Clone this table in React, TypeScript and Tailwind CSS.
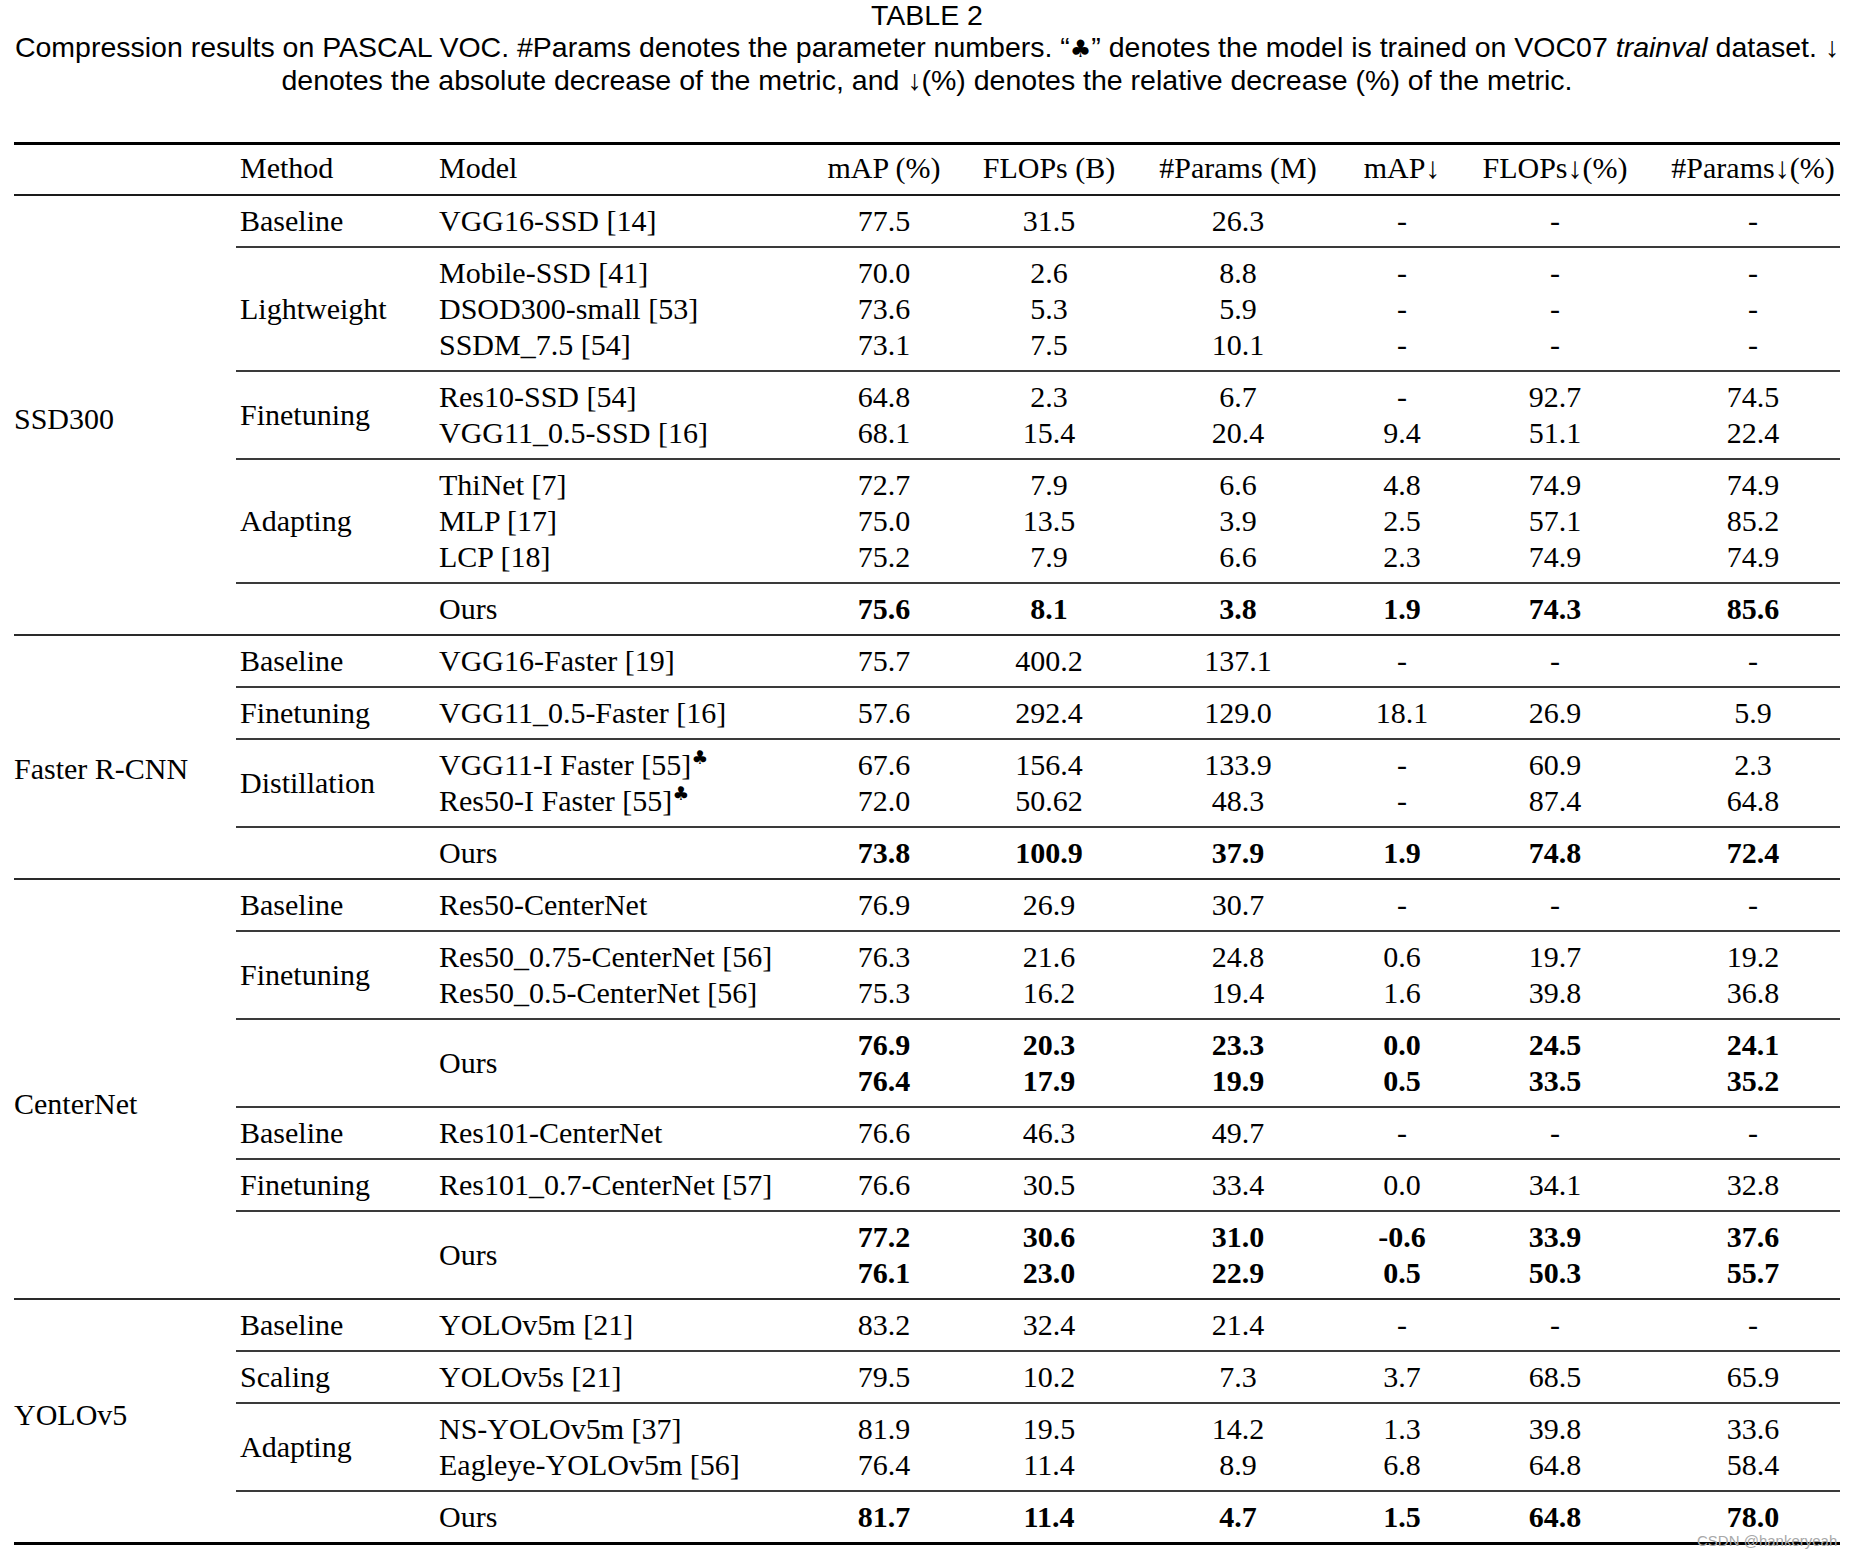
import React from "react";

type Line = { model?: string; club?: boolean; vals: string[] };
type Section = { method: string; lines: Line[]; bold?: boolean; span?: string };
type Group = { label: string; labelPad: string; sections: Section[] };

const dash = ["-", "-", "-"];

const groups: Group[] = [
  {
    label: "SSD300",
    labelPad: "pt-[8px]",
    sections: [
      { method: "Baseline", lines: [{ model: "VGG16-SSD [14]", vals: ["77.5", "31.5", "26.3", ...dash] }] },
      {
        method: "Lightweight",
        lines: [
          { model: "Mobile-SSD [41]", vals: ["70.0", "2.6", "8.8", ...dash] },
          { model: "DSOD300-small [53]", vals: ["73.6", "5.3", "5.9", ...dash] },
          { model: "SSDM_7.5 [54]", vals: ["73.1", "7.5", "10.1", ...dash] },
        ],
      },
      {
        method: "Finetuning",
        lines: [
          { model: "Res10-SSD [54]", vals: ["64.8", "2.3", "6.7", "-", "92.7", "74.5"] },
          { model: "VGG11_0.5-SSD [16]", vals: ["68.1", "15.4", "20.4", "9.4", "51.1", "22.4"] },
        ],
      },
      {
        method: "Adapting",
        lines: [
          { model: "ThiNet [7]", vals: ["72.7", "7.9", "6.6", "4.8", "74.9", "74.9"] },
          { model: "MLP [17]", vals: ["75.0", "13.5", "3.9", "2.5", "57.1", "85.2"] },
          { model: "LCP [18]", vals: ["75.2", "7.9", "6.6", "2.3", "74.9", "74.9"] },
        ],
      },
      { method: "", bold: true, lines: [{ model: "Ours", vals: ["75.6", "8.1", "3.8", "1.9", "74.3", "85.6"] }] },
    ],
  },
  {
    label: "Faster R-CNN",
    labelPad: "pt-[24px]",
    sections: [
      { method: "Baseline", lines: [{ model: "VGG16-Faster [19]", vals: ["75.7", "400.2", "137.1", ...dash] }] },
      { method: "Finetuning", lines: [{ model: "VGG11_0.5-Faster [16]", vals: ["57.6", "292.4", "129.0", "18.1", "26.9", "5.9"] }] },
      {
        method: "Distillation",
        lines: [
          { model: "VGG11-I Faster [55]", club: true, vals: ["67.6", "156.4", "133.9", "-", "60.9", "2.3"] },
          { model: "Res50-I Faster [55]", club: true, vals: ["72.0", "50.62", "48.3", "-", "87.4", "64.8"] },
        ],
      },
      { method: "", bold: true, lines: [{ model: "Ours", vals: ["73.8", "100.9", "37.9", "1.9", "74.8", "72.4"] }] },
    ],
  },
  {
    label: "CenterNet",
    labelPad: "pt-[30px]",
    sections: [
      { method: "Baseline", lines: [{ model: "Res50-CenterNet", vals: ["76.9", "26.9", "30.7", ...dash] }] },
      {
        method: "Finetuning",
        lines: [
          { model: "Res50_0.75-CenterNet [56]", vals: ["76.3", "21.6", "24.8", "0.6", "19.7", "19.2"] },
          { model: "Res50_0.5-CenterNet [56]", vals: ["75.3", "16.2", "19.4", "1.6", "39.8", "36.8"] },
        ],
      },
      {
        method: "",
        bold: true,
        span: "Ours",
        lines: [
          { vals: ["76.9", "20.3", "23.3", "0.0", "24.5", "24.1"] },
          { vals: ["76.4", "17.9", "19.9", "0.5", "33.5", "35.2"] },
        ],
      },
      { method: "Baseline", lines: [{ model: "Res101-CenterNet", vals: ["76.6", "46.3", "49.7", ...dash] }] },
      { method: "Finetuning", lines: [{ model: "Res101_0.7-CenterNet [57]", vals: ["76.6", "30.5", "33.4", "0.0", "34.1", "32.8"] }] },
      {
        method: "",
        bold: true,
        span: "Ours",
        lines: [
          { vals: ["77.2", "30.6", "31.0", "-0.6", "33.9", "37.6"] },
          { vals: ["76.1", "23.0", "22.9", "0.5", "50.3", "55.7"] },
        ],
      },
    ],
  },
  {
    label: "YOLOv5",
    labelPad: "pb-[12px]",
    sections: [
      { method: "Baseline", lines: [{ model: "YOLOv5m [21]", vals: ["83.2", "32.4", "21.4", ...dash] }] },
      { method: "Scaling", lines: [{ model: "YOLOv5s [21]", vals: ["79.5", "10.2", "7.3", "3.7", "68.5", "65.9"] }] },
      {
        method: "Adapting",
        lines: [
          { model: "NS-YOLOv5m [37]", vals: ["81.9", "19.5", "14.2", "1.3", "39.8", "33.6"] },
          { model: "Eagleye-YOLOv5m [56]", vals: ["76.4", "11.4", "8.9", "6.8", "64.8", "58.4"] },
        ],
      },
      { method: "", bold: true, lines: [{ model: "Ours", vals: ["81.7", "11.4", "4.7", "1.5", "64.8", "78.0"] }] },
    ],
  },
];

function NumCells({ vals, bold }: { vals: string[]; bold?: boolean }) {
  const w = ["w-[168px]", "w-[162px]", "w-[216px]", "w-[112px]", "w-[194px]", "w-[188px] pl-[14px]"];
  return (
    <div className={`flex h-[36px] items-center ${bold ? "font-bold" : ""}`}>
      <div className={`${w[0]} text-center`}>{vals[0]}</div>
      <div className={`${w[1]} text-center`}>{vals[1]}</div>
      <div className={`${w[2]} text-center`}>{vals[2]}</div>
      <div className={`${w[3]} text-center`}>{vals[3]}</div>
      <div className={`${w[4]} text-center`}>{vals[4]}</div>
      <div className={`${w[5]} text-center`}>{vals[5]}</div>
    </div>
  );
}

function SectionRow({ s, last }: { s: Section; last: boolean }) {
  return (
    <div className={`flex py-[7px] ${last ? "" : "border-b-2 border-[#3a3a3a]"}`}>
      <div className="w-[200px] pl-[4px] flex items-center whitespace-nowrap">{s.method}</div>
      <div className="w-[364px] pl-[3px] flex flex-col justify-center">
        {s.span ? (
          <div className="whitespace-nowrap">{s.span}</div>
        ) : (
          s.lines.map((l, i) => (
            <div key={i} className="h-[36px] whitespace-nowrap">
              {l.model}
              {l.club && <span className="relative -top-[11px] text-[19px] leading-none font-['DejaVu_Sans',sans-serif]">♣</span>}
            </div>
          ))
        )}
      </div>
      <div className="flex flex-col">
        {s.lines.map((l, i) => (
          <NumCells key={i} vals={l.vals} bold={s.bold} />
        ))}
      </div>
    </div>
  );
}

export default function App() {
  return (
    <div className="w-[1854px] h-[1558px] bg-white text-black relative overflow-hidden">
      <div className="font-['Liberation_Sans',Arial,sans-serif] text-[28.5px] leading-[31.5px] text-center">
        <div>TABLE 2</div>
        <div>
          Compression results on PASCAL VOC. #Params denotes the parameter numbers. “
          <span className="font-['DejaVu_Sans',sans-serif] text-[24px]">♣</span>” denotes the model is trained on VOC07{" "}
          <i>trainval</i> dataset. ↓
        </div>
        <div>denotes the absolute decrease of the metric, and ↓(%) denotes the relative decrease (%) of the metric.</div>
      </div>

      <div className="mt-[45px] ml-[14px] w-[1826px] font-['Liberation_Serif','Times_New_Roman',serif] text-[30px] leading-[36px]">
        <div className="border-t-[3px] border-b-2 border-t-black border-b-[#1a1a1a] flex pt-[5px] pb-[8px]">
          <div className="w-[222px]" />
          <div className="w-[200px] pl-[4px]">Method</div>
          <div className="w-[364px] pl-[3px]">Model</div>
          <div className="flex h-[36px] items-center">
            <div className="w-[168px] text-center whitespace-nowrap">mAP (%)</div>
            <div className="w-[162px] text-center whitespace-nowrap">FLOPs (B)</div>
            <div className="w-[216px] text-center whitespace-nowrap">#Params (M)</div>
            <div className="w-[112px] text-center whitespace-nowrap">mAP↓</div>
            <div className="w-[194px] text-center whitespace-nowrap">FLOPs↓(%)</div>
            <div className="w-[188px] pl-[14px] text-center whitespace-nowrap">#Params↓(%)</div>
          </div>
        </div>

        {groups.map((g, gi) => (
          <div
            key={gi}
            className={`flex ${gi === groups.length - 1 ? "border-b-[3px] border-black" : "border-b-2 border-[#2a2a2a]"}`}
          >
            <div className={`w-[222px] flex items-center whitespace-nowrap ${g.labelPad}`}>{g.label}</div>
            <div className="flex-1 flex flex-col">
              {g.sections.map((s, si) => (
                <SectionRow key={si} s={s} last={si === g.sections.length - 1} />
              ))}
            </div>
          </div>
        ))}
      </div>

      <div className="absolute left-[1697px] top-[1532px] font-['Liberation_Sans',Arial,sans-serif] text-[15px] leading-[18px] text-[#a8a8a8] whitespace-nowrap">
        CSDN @hankeryeah
      </div>
    </div>
  );
}
